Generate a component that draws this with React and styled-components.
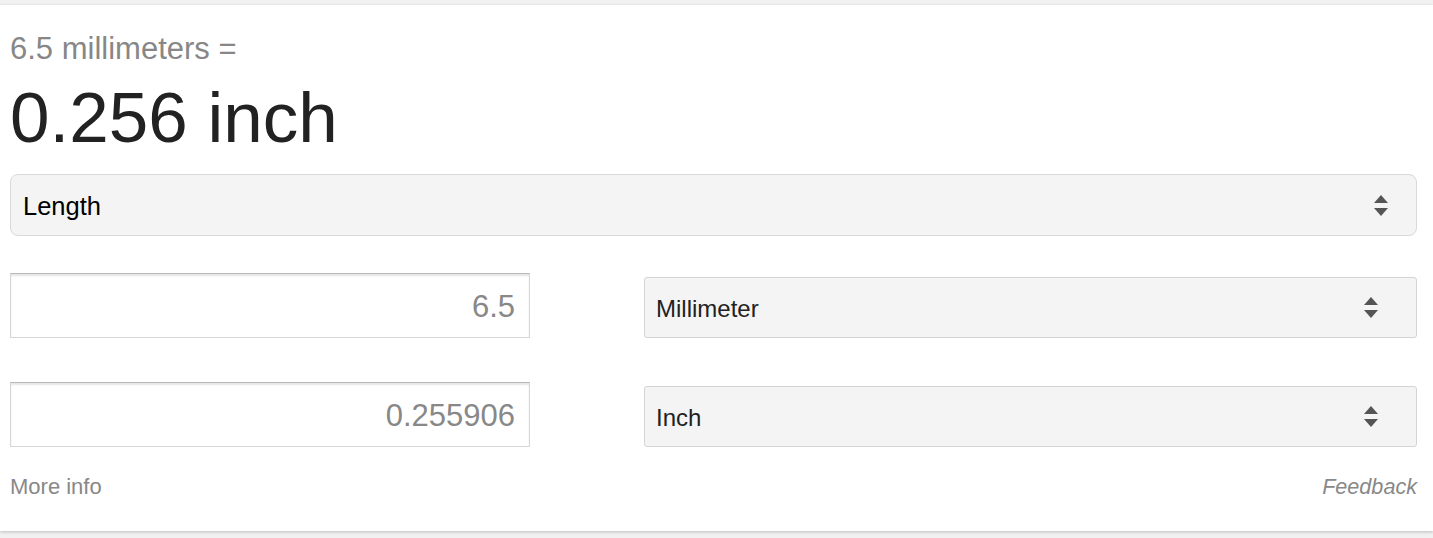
import React from "react";
import styled, { createGlobalStyle } from "styled-components";

const Global = createGlobalStyle`
  html, body {
    margin: 0;
    padding: 0;
    background: #f1f1f1;
    font-family: "Liberation Sans", Arial, Helvetica, sans-serif;
  }
`;

const Page = styled.div`
  padding-top: 5px;
  height: 538px;
  box-sizing: border-box;
  overflow: hidden;
`;

const Card = styled.div`
  background: #ffffff;
  box-shadow: 0 1px 3px rgba(0, 0, 0, 0.22);
  padding: 26px 16px 31px 10px;
  box-sizing: border-box;
  height: 526px;
  display: flex;
  flex-direction: column;
`;

const Query = styled.div`
  font-size: 31px;
  line-height: 36px;
  color: #878787;
`;

const Result = styled.div`
  font-size: 71px;
  line-height: 80px;
  color: #222;
  margin-top: 11px;
`;

const SelectBox = styled.div`
  display: flex;
  align-items: center;
  justify-content: space-between;
  box-sizing: border-box;
  background: #f4f4f4;
  border: ${(p) => (p.$large ? "1.5px solid #d9d9d9" : "1px solid #d4d4d4")};
  border-radius: ${(p) => (p.$large ? "8px" : "3px")};
  height: ${(p) => (p.$large ? "62px" : "61px")};
  padding: ${(p) => (p.$large ? "0 28px 0 12px" : "0 38px 0 11px")};
  font-size: ${(p) => (p.$large ? "25.5px" : "24px")};
  color: ${(p) => (p.$large ? "#000" : "#222")};
`;

const SelectLabel = styled.span`
  padding-top: 3px;
`;

const CategorySelect = styled(SelectBox)`
  margin-top: 16px;
`;

const ConvRow = styled.div`
  display: grid;
  grid-template-columns: 520px 1fr;
  column-gap: 114px;
  align-items: end;
  margin-top: ${(p) => p.$gap}px;
`;

const NumberField = styled.div`
  box-sizing: border-box;
  height: 65px;
  background: #fff;
  border: 1px solid #d6d6d6;
  border-top-color: #b9b9b9;
  box-shadow: inset 0 2px 2px rgba(0, 0, 0, 0.1);
  display: flex;
  align-items: center;
  justify-content: flex-end;
  padding: 3px 14px 0 0;
  font-size: 31px;
  color: #888;
`;

const Footer = styled.div`
  display: flex;
  justify-content: space-between;
  margin-top: 27px;
  font-size: 22px;
  line-height: 26px;
  color: #888;
`;

const FeedbackLink = styled.span`
  font-style: italic;
  font-size: 21.6px;
`;

const Arrows = () => (
  <svg width="14" height="21" viewBox="0 0 14 21" aria-hidden="true">
    <path d="M7 0 L14 8 L0 8 Z" fill="#555" />
    <path d="M0 13 L14 13 L7 21 Z" fill="#555" />
  </svg>
);

const Select = ({ label, large }) => {
  const Box = large ? CategorySelect : SelectBox;
  return (
    <Box $large={large}>
      <SelectLabel>{label}</SelectLabel>
      <Arrows />
    </Box>
  );
};

export default function App() {
  return (
    <>
      <Global />
      <Page>
        <Card>
          <Query>6.5 millimeters =</Query>
          <Result>0.256 inch</Result>
          <Select label="Length" large />
          <ConvRow $gap={37}>
            <NumberField>6.5</NumberField>
            <Select label="Millimeter" />
          </ConvRow>
          <ConvRow $gap={44}>
            <NumberField>0.255906</NumberField>
            <Select label="Inch" />
          </ConvRow>
          <Footer>
            <span>More info</span>
            <FeedbackLink>Feedback</FeedbackLink>
          </Footer>
        </Card>
      </Page>
    </>
  );
}
